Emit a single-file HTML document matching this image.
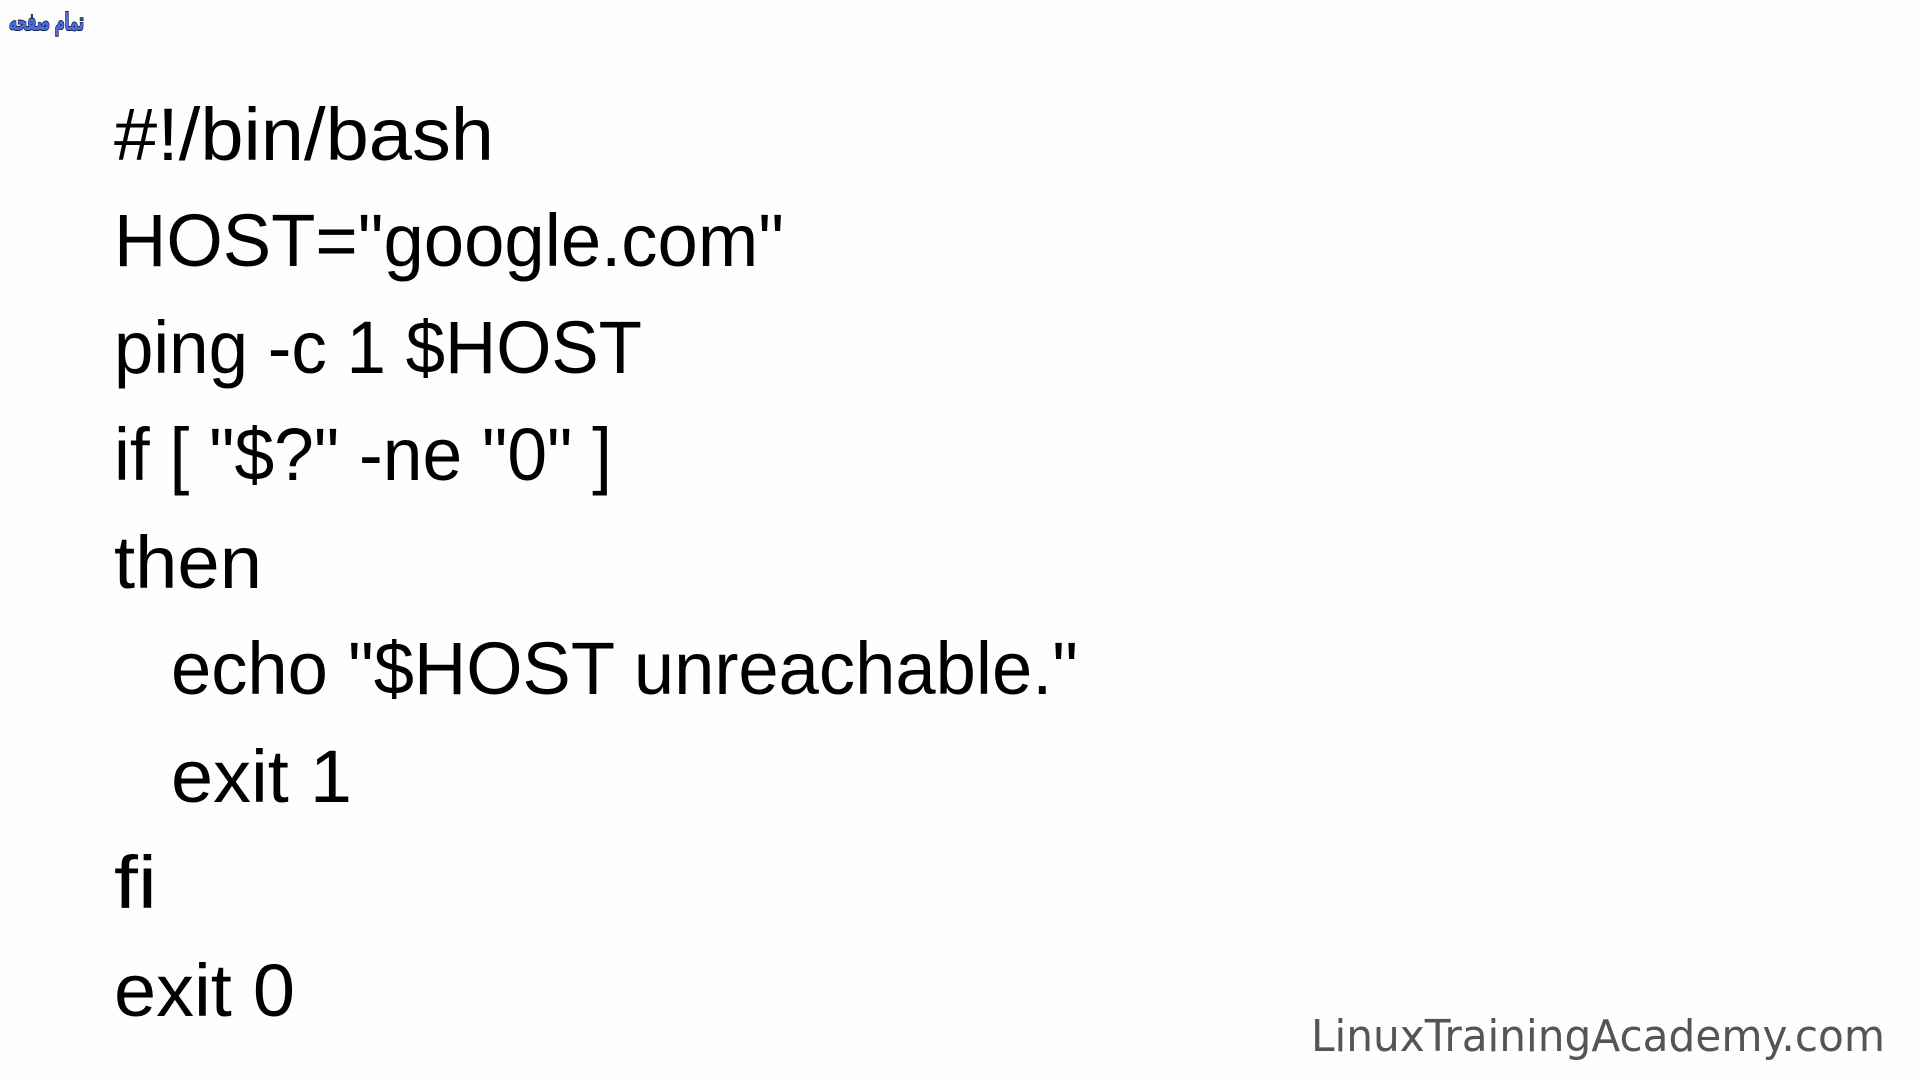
<!DOCTYPE html>
<html><head><meta charset="utf-8"><style>
html,body{margin:0;padding:0;background:#fff;}
body{width:1920px;height:1080px;overflow:hidden;}
svg{display:block}
</style></head><body>
<svg width="1920" height="1080" viewBox="0 0 1920 1080" xmlns="http://www.w3.org/2000/svg">
<rect width="1920" height="1080" fill="#fefefe"/>
<text x="84" y="30" text-anchor="start" direction="rtl" font-family="'DejaVu Sans', sans-serif" font-weight="bold" font-size="24" fill="#4a6ee0" stroke="#1a1f40" stroke-width="2" paint-order="stroke" textLength="75" lengthAdjust="spacingAndGlyphs">تمام صفحه</text>
<g font-family="'Liberation Sans', sans-serif" font-size="74" fill="#000">
<text x="114" y="160" textLength="380" lengthAdjust="spacingAndGlyphs">#!/bin/bash</text>
<text x="114" y="266" textLength="670" lengthAdjust="spacingAndGlyphs">HOST="google.com"</text>
<text x="114" y="373" textLength="528" lengthAdjust="spacingAndGlyphs">ping -c 1 $HOST</text>
<text x="114" y="480" textLength="498" lengthAdjust="spacingAndGlyphs">if [ "$?" -ne "0" ]</text>
<text x="114" y="588" textLength="148" lengthAdjust="spacingAndGlyphs">then</text>
<text x="171" y="694" textLength="907" lengthAdjust="spacingAndGlyphs">echo "$HOST unreachable."</text>
<text x="171" y="802" textLength="181" lengthAdjust="spacingAndGlyphs">exit 1</text>
<text x="114" y="908" textLength="43" lengthAdjust="spacingAndGlyphs">fi</text>
<text x="114" y="1016" textLength="181" lengthAdjust="spacingAndGlyphs">exit 0</text>
</g>
<text x="1311" y="1051" font-family="'DejaVu Sans', sans-serif" font-size="44" fill="#555" textLength="574" lengthAdjust="spacingAndGlyphs">LinuxTrainingAcademy.com</text>
</svg>
</body></html>
